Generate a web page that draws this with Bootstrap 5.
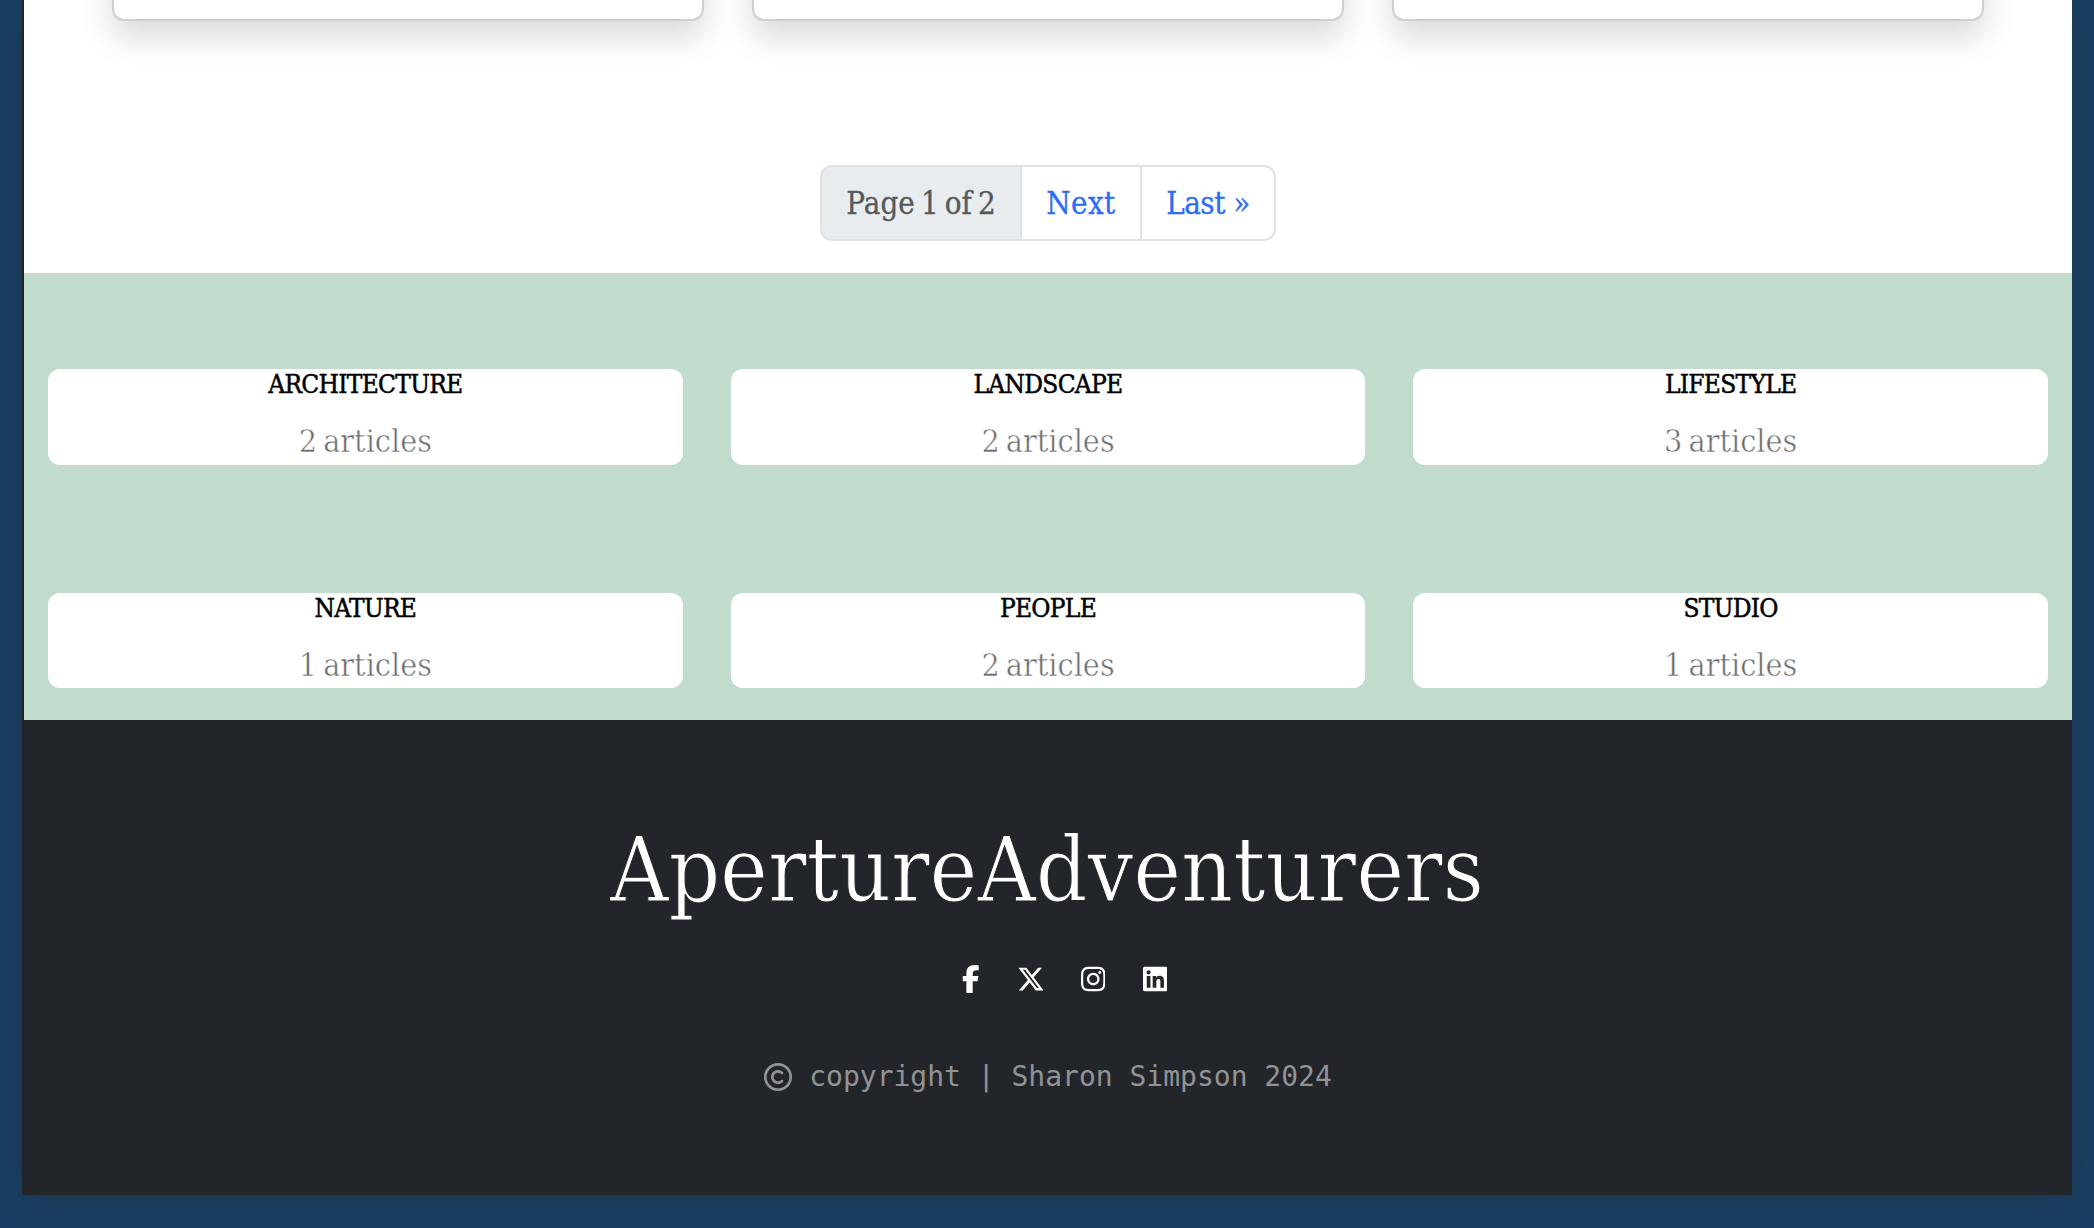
<!DOCTYPE html>
<html lang="en">
<head>
<meta charset="utf-8">
<meta name="viewport" content="width=device-width, initial-scale=1">
<title>ApertureAdventurers</title>
<link href="https://cdn.jsdelivr.net/npm/bootstrap@5.3.0/dist/css/bootstrap.min.css" rel="stylesheet">
<style>
  body { background: #194064; height: 1228px; overflow: hidden; font-family: "DejaVu Serif Condensed", "DejaVu Serif", serif; font-stretch: condensed; }
  .window-frame { width: 2050px; height: 1195px; margin-left: 22px; background: #222529; box-shadow: 0 4px 36px 0 rgba(33,37,41,.38); }
  .page-body { margin-left: 2px; }
  .posts-area { height: 273px; }
  .post-row { width: 1920px; padding: 0 24px; gap: 48px; }
  .post-card { height: 321px; margin-top: -300px; border: 2px solid #cfcfcf; border-radius: 12px; box-shadow: 0 16px 32px rgba(0,0,0,.15); }
  .pagination { --bs-pagination-font-size: 31px; --bs-pagination-border-width: 2px; --bs-pagination-border-radius: 12px; --bs-pagination-color: #2c6cf6; --bs-pagination-disabled-color: #54595c; --bs-pagination-disabled-bg: #e8ecef; margin-top: 144px; -webkit-text-stroke: .3px currentColor; }
  .page-link { height: 76px; line-height: 72px; padding: 0; text-align: center; }
  .page-item:not(:first-child) .page-link { margin-left: -2px; }
  .w-page { width: 202px; letter-spacing: .1px; word-spacing: -3px; }
  .w-next { width: 122px; letter-spacing: .4px; }
  .w-last { width: 136px; letter-spacing: -.5px; }
  .cat-area { background: #c1dbcd; height: 447px; padding-top: 96px; }
  .cat-row { padding: 0 24px; gap: 48px; }
  .cat-row + .cat-row { margin-top: 128px; }
  .cat-box { height: 96px; border-radius: 12px; }
  .cat-row + .cat-row .cat-box { height: 95px; }
  .cat-name { font-size: 26px; line-height: 31px; letter-spacing: -.7px; color: #000; -webkit-text-stroke: .5px #000; }
  .cat-count { font-size: 32px; line-height: 48px; margin-top: 17px; word-spacing: -3px; color: #6c6c6c; -webkit-text-stroke: .5px #fff; }
  .brand { font-size: 90px; line-height: 106px; height: 106px; margin-top: 97px; letter-spacing: -.1px; color: #fff; -webkit-text-stroke: 1.1px #222529; }
  footer { display: flow-root; }
  .social { height: 28px; margin-top: 42px; color: #fff; }
  .social svg, .copy svg { height: 28px; fill: currentColor; display: block; }
  .ic-f { margin-right: 38.5px; }
  .ic-x { margin-right: 37.5px; }
  .ic-i { margin-right: 37.5px; }
  .social-set { padding-left: 35px; }
  .copy { font: 28px/42px "DejaVu Sans Mono", monospace; color: #929395; margin-top: 63px; padding-left: 2px; gap: 17px; }
</style>
</head>
<body>
<div class="window-frame">
  <div class="page-body">
    <section class="posts-area bg-white">
      <div class="post-row d-flex mx-auto">
        <div class="post-card bg-white flex-fill"></div>
        <div class="post-card bg-white flex-fill"></div>
        <div class="post-card bg-white flex-fill"></div>
      </div>
      <ul class="pagination justify-content-center mb-0">
        <li class="page-item disabled"><span class="page-link w-page">Page 1 of 2</span></li>
        <li class="page-item"><a class="page-link w-next" href="#">Next</a></li>
        <li class="page-item"><a class="page-link w-last" href="#">Last »</a></li>
      </ul>
    </section>
    <section class="cat-area text-center">
      <div class="cat-row d-flex">
        <div class="cat-box bg-white w-100"><div class="cat-name">ARCHITECTURE</div><div class="cat-count">2 articles</div></div>
        <div class="cat-box bg-white w-100"><div class="cat-name">LANDSCAPE</div><div class="cat-count">2 articles</div></div>
        <div class="cat-box bg-white w-100"><div class="cat-name">LIFESTYLE</div><div class="cat-count">3 articles</div></div>
      </div>
      <div class="cat-row d-flex">
        <div class="cat-box bg-white w-100"><div class="cat-name">NATURE</div><div class="cat-count">1 articles</div></div>
        <div class="cat-box bg-white w-100"><div class="cat-name">PEOPLE</div><div class="cat-count">2 articles</div></div>
        <div class="cat-box bg-white w-100"><div class="cat-name">STUDIO</div><div class="cat-count">1 articles</div></div>
      </div>
    </section>
  </div>
  <footer class="text-center">
    <div class="brand">ApertureAdventurers</div>
    <div class="social social-set d-flex justify-content-center">
      <svg class="ic-f" viewBox="0 0 320 512"><path d="M80 299.3V512H196V299.3h86.5l18-97.8H196V166.9c0-51.7 20.3-71.5 72.7-71.5c16.3 0 29.4 .4 37 1.2V7.9C291.4 4 256.4 0 236.2 0C129.3 0 80 50.5 80 159.4v42.1H14v97.8H80z"/></svg>
      <svg class="ic-x" viewBox="20 0 472 512"><path d="M389.2 48h70.6L305.6 224.2 487 464H345L233.7 318.6 106.5 464H35.8L200.7 275.5 26.8 48H172.4L272.9 180.9 389.2 48zM364.4 421.8h39.1L151.1 88h-42L364.4 421.8z"/></svg>
      <svg class="ic-i" viewBox="0 0 448 512"><path d="M224.1 141c-63.6 0-114.9 51.3-114.9 114.9s51.3 114.9 114.9 114.9S339 319.5 339 255.9 287.7 141 224.1 141zm0 189.6c-41.1 0-74.7-33.5-74.7-74.7s33.5-74.7 74.7-74.7 74.7 33.5 74.7 74.7-33.6 74.7-74.7 74.7zm146.4-194.3c0 14.9-12 26.8-26.8 26.8-14.9 0-26.8-12-26.8-26.8s12-26.8 26.8-26.8 26.8 12 26.8 26.8zm76.1 27.2c-1.7-35.9-9.9-67.7-36.2-93.9-26.2-26.2-58-34.4-93.9-36.2-37-2.1-147.9-2.1-184.9 0-35.8 1.7-67.6 9.9-93.9 36.1s-34.4 58-36.2 93.9c-2.1 37-2.1 147.9 0 184.9 1.7 35.9 9.9 67.7 36.2 93.9s58 34.4 93.9 36.2c37 2.1 147.9 2.1 184.9 0 35.9-1.7 67.7-9.9 93.9-36.2 26.2-26.2 34.4-58 36.2-93.9 2.1-37 2.1-147.8 0-184.8zM398.8 388c-7.8 19.6-22.9 34.7-42.6 42.6-29.5 11.7-99.5 9-132.1 9s-102.7 2.6-132.1-9c-19.6-7.8-34.7-22.9-42.6-42.6-11.7-29.5-9-99.5-9-132.1s-2.6-102.7 9-132.1c7.8-19.6 22.9-34.7 42.6-42.6 29.5-11.7 99.5-9 132.1-9s102.7-2.6 132.1 9c19.6 7.8 34.7 22.9 42.6 42.6 11.7 29.5 9 99.5 9 132.1s2.7 102.7-9 132.1z"/></svg>
      <svg viewBox="0 0 448 512"><path d="M416 32H31.9C14.3 32 0 46.5 0 64.3v383.4C0 465.5 14.3 480 31.9 480H416c17.6 0 32-14.5 32-32.3V64.3c0-17.8-14.4-32.3-32-32.3zM135.4 416H69V202.2h66.5V416zm-33.2-243c-21.3 0-38.5-17.3-38.5-38.5S80.9 96 102.2 96c21.2 0 38.5 17.3 38.5 38.5 0 21.3-17.2 38.5-38.5 38.5zm282.1 243h-66.4V312c0-24.8-.5-56.7-34.5-56.7-34.6 0-39.9 27-39.9 54.9V416h-66.4V202.2h63.7v29.2h.9c8.9-16.8 30.6-34.5 62.2-34.5 66.5 0 78.9 43.8 78.9 100.9V416z"/></svg>
    </div>
    <div class="copy d-flex justify-content-center align-items-center">
      <svg viewBox="0 0 512 512"><path d="M256 48a208 208 0 1 1 0 416 208 208 0 1 1 0-416zm0 464A256 256 0 1 0 256 0a256 256 0 1 0 0 512zM199.4 312.6c-31.2-31.2-31.2-81.9 0-113.1s81.9-31.2 113.1 0c9.4 9.4 24.6 9.4 33.9 0s9.4-24.6 0-33.9c-50-50-131-50-181 0s-50 131 0 181s131 50 181 0c9.4-9.4 9.4-24.6 0-33.9s-24.6-9.4-33.9 0c-31.2 31.2-81.9 31.2-113.1 0z"/></svg>
      <span>copyright | Sharon Simpson 2024</span>
    </div>
  </footer>
</div>
<script src="https://cdn.jsdelivr.net/npm/bootstrap@5.3.0/dist/js/bootstrap.bundle.min.js"></script>
</body>
</html>
